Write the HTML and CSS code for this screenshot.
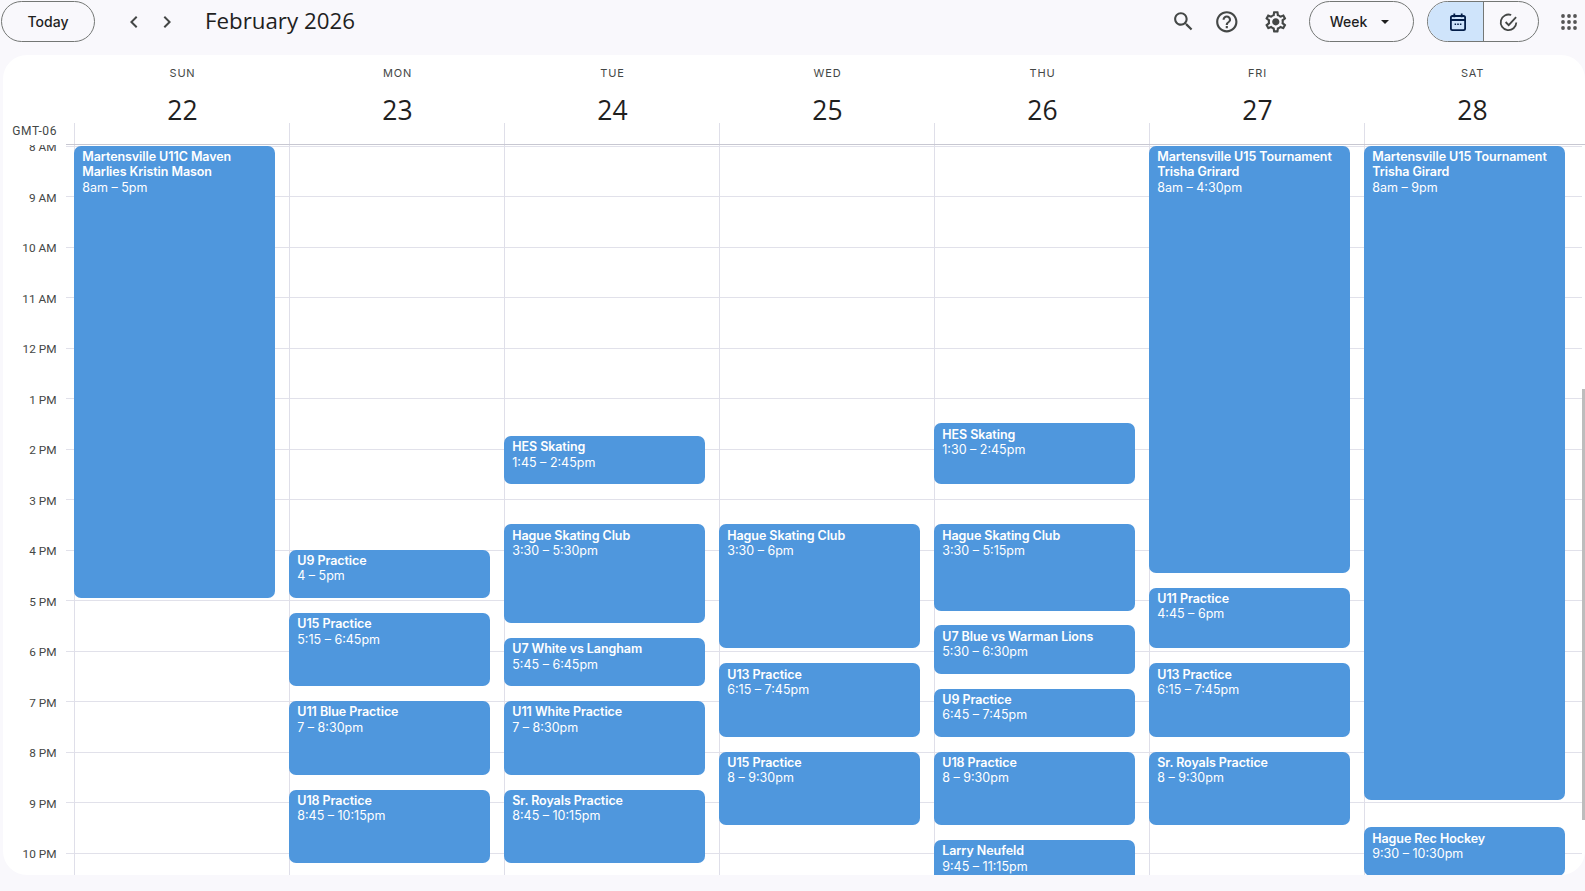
FILE: index.html
```html
<!doctype html>
<html>
<head>
    <meta charset="UTF-8">
    <title>February 2026 - Calendar</title>
    <link rel="stylesheet" href="styles.css">
</head>
<body>
<div class="m-top">
    <button class="btn today">Today</button>
    <div class="nav">
        <svg viewBox="0 0 24 24"><path d="M15.41 7.41 14 6l-6 6 6 6 1.41-1.41L10.83 12z"/></svg>
        <svg viewBox="0 0 24 24"><path d="M8.59 16.59 10 18l6-6-6-6-1.41 1.41L13.17 12z"/></svg>
    </div>
    <h1 class="title">February 2026</h1>
    <div class="tools">
        <svg class="ico search" viewBox="0 0 24 24"><path d="M15.5 14h-.79l-.28-.27C15.41 12.59 16 11.11 16 9.5 16 5.91 13.09 3 9.5 3S3 5.91 3 9.5 5.91 16 9.5 16c1.61 0 3.09-.59 4.23-1.57l.27.28v.79l5 4.99L20.49 19l-4.99-5zm-6 0C7.01 14 5 11.99 5 9.5S7.01 5 9.5 5 14 7.01 14 9.5 11.99 14 9.5 14z"/></svg>
        <svg class="ico help" viewBox="0 0 24 24"><path d="M11 18h2v-2h-2v2zm1-16C6.48 2 2 6.48 2 12s4.48 10 10 10 10-4.48 10-10S17.52 2 12 2zm0 18c-4.41 0-8-3.59-8-8s3.59-8 8-8 8 3.59 8 8-3.59 8-8 8zm0-14c-2.21 0-4 1.79-4 4h2c0-1.1.9-2 2-2s2 .9 2 2c0 2-3 1.75-3 5h2c0-2.25 3-2.5 3-5 0-2.21-1.79-4-4-4z"/></svg>
        <svg class="ico gear" viewBox="0 0 24 24"><path d="M19.43 12.98c.04-.32.07-.64.07-.98 0-.34-.03-.66-.07-.98l2.11-1.65c.19-.15.24-.42.12-.64l-2-3.46c-.09-.16-.26-.25-.44-.25-.06 0-.12.01-.17.03l-2.49 1c-.52-.4-1.08-.73-1.69-.98l-.38-2.65C14.46 2.18 14.25 2 14 2h-4c-.25 0-.46.18-.49.42l-.38 2.65c-.61.25-1.17.59-1.69.98l-2.49-1c-.06-.02-.12-.03-.18-.03-.17 0-.34.09-.43.25l-2 3.46c-.13.22-.07.49.12.64l2.11 1.65c-.04.32-.07.65-.07.98 0 .33.03.66.07.98l-2.11 1.65c-.19.15-.24.42-.12.64l2 3.46c.09.16.26.25.44.25.06 0 .12-.01.17-.03l2.49-1c.52.4 1.08.73 1.69.98l.38 2.65c.03.24.24.42.49.42h4c.25 0 .46-.18.49-.42l.38-2.65c.61-.25 1.17-.59 1.69-.98l2.49 1c.06.02.12.03.18.03.17 0 .34-.09.43-.25l2-3.46c.12-.22.07-.49-.12-.64l-2.11-1.65zm-1.98-1.71c.04.31.05.52.05.73 0 .21-.02.43-.05.73l-.14 1.13.89.7 1.08.84-.7 1.21-1.27-.51-1.04-.42-.9.68c-.43.32-.84.56-1.25.73l-1.06.43-.16 1.13-.2 1.35h-1.4l-.19-1.35-.16-1.13-1.06-.43c-.43-.18-.83-.41-1.23-.71l-.91-.7-1.06.43-1.27.51-.7-1.21 1.08-.84.89-.7-.14-1.13c-.03-.31-.05-.54-.05-.74s.02-.43.05-.73l.14-1.13-.89-.7-1.08-.84.7-1.21 1.27.51 1.04.42.9-.68c.43-.32.84-.56 1.25-.73l1.06-.43.16-1.13.2-1.35h1.39l.19 1.35.16 1.13 1.06.43c.43.18.83.41 1.23.71l.91.7 1.06-.43 1.27-.51.7 1.21-1.07.85-.89.7.14 1.13zM12 8.6c-1.88 0-3.4 1.52-3.4 3.4s1.52 3.4 3.4 3.4 3.4-1.52 3.4-3.4-1.52-3.4-3.4-3.4z"/></svg>
    </div>
    <button class="btn week">Week<i class="caret"></i></button>
    <div class="toggle">
        <span class="on">
            <svg viewBox="0 0 24 24"><rect x="4.9" y="6" width="14.2" height="14.2" rx="1.6" class="line"/><path d="M4.9 10h14.2" class="line"/><path d="M8.3 3.4v3.8M15.7 3.4v3.8" class="line"/><path d="M8.6 13.6h1.5v1.3H8.6zM11.2 13.6h1.6v1.3h-1.6zM13.9 13.6h1.5v1.3h-1.5z"/></svg>
        </span>
        <span class="off">
            <svg viewBox="0 0 24 24"><path d="M18.3 12.5A7.8 7.8 0 1 1 13.2 5" class="line"/><path d="m7.6 12 3.1 3.2 7.4-8" class="line"/></svg>
        </span>
    </div>
    <svg class="apps" viewBox="0 0 18 18"><circle cx="3" cy="3" r="1.9"/><circle cx="9" cy="3" r="1.9"/><circle cx="15" cy="3" r="1.9"/><circle cx="3" cy="9" r="1.9"/><circle cx="9" cy="9" r="1.9"/><circle cx="15" cy="9" r="1.9"/><circle cx="3" cy="15" r="1.9"/><circle cx="9" cy="15" r="1.9"/><circle cx="15" cy="15" r="1.9"/></svg>
</div>
<div class="m-cal">
    <div class="hd">
        <div class="gmt">GMT-06</div>
        <div class="dh"><p class="nm">SUN</p><p class="num">22</p><div class="tick"></div></div>
        <div class="dh"><p class="nm">MON</p><p class="num">23</p><div class="tick"></div></div>
        <div class="dh"><p class="nm">TUE</p><p class="num">24</p><div class="tick"></div></div>
        <div class="dh"><p class="nm">WED</p><p class="num">25</p><div class="tick"></div></div>
        <div class="dh"><p class="nm">THU</p><p class="num">26</p><div class="tick"></div></div>
        <div class="dh"><p class="nm">FRI</p><p class="num">27</p><div class="tick"></div></div>
        <div class="dh"><p class="nm">SAT</p><p class="num">28</p><div class="tick"></div></div>
    </div>
    <div class="bd">
        <div class="lines">
            <i></i><i></i><i></i><i></i><i></i><i></i><i></i><i></i><i></i><i></i><i></i><i></i><i></i><i></i><i></i>
        </div>
        <ul class="times">
            <li>8 AM</li><li>9 AM</li><li>10 AM</li><li>11 AM</li><li>12 PM</li><li>1 PM</li><li>2 PM</li><li>3 PM</li><li>4 PM</li><li>5 PM</li><li>6 PM</li><li>7 PM</li><li>8 PM</li><li>9 PM</li><li>10 PM</li>
        </ul>
        <div class="day">
            <div class="ev" style="--s:0;--d:9"><b>Martensville U11C Maven<br>Marlies Kristin Mason</b>8am – 5pm</div>
        </div>
        <div class="day">
            <div class="ev" style="--s:8;--d:1"><b>U9 Practice</b>4 – 5pm</div>
            <div class="ev" style="--s:9.25;--d:1.5"><b>U15 Practice</b>5:15 – 6:45pm</div>
            <div class="ev" style="--s:11;--d:1.5"><b>U11 Blue Practice</b>7 – 8:30pm</div>
            <div class="ev" style="--s:12.75;--d:1.5"><b>U18 Practice</b>8:45 – 10:15pm</div>
        </div>
        <div class="day">
            <div class="ev" style="--s:5.75;--d:1"><b>HES Skating</b>1:45 – 2:45pm</div>
            <div class="ev" style="--s:7.5;--d:2"><b>Hague Skating Club</b>3:30 – 5:30pm</div>
            <div class="ev" style="--s:9.75;--d:1"><b>U7 White vs Langham</b>5:45 – 6:45pm</div>
            <div class="ev" style="--s:11;--d:1.5"><b>U11 White Practice</b>7 – 8:30pm</div>
            <div class="ev" style="--s:12.75;--d:1.5"><b>Sr. Royals Practice</b>8:45 – 10:15pm</div>
        </div>
        <div class="day">
            <div class="ev" style="--s:7.5;--d:2.5"><b>Hague Skating Club</b>3:30 – 6pm</div>
            <div class="ev" style="--s:10.25;--d:1.5"><b>U13 Practice</b>6:15 – 7:45pm</div>
            <div class="ev" style="--s:12;--d:1.5"><b>U15 Practice</b>8 – 9:30pm</div>
        </div>
        <div class="day">
            <div class="ev" style="--s:5.5;--d:1.25"><b>HES Skating</b>1:30 – 2:45pm</div>
            <div class="ev" style="--s:7.5;--d:1.75"><b>Hague Skating Club</b>3:30 – 5:15pm</div>
            <div class="ev" style="--s:9.5;--d:1"><b>U7 Blue vs Warman Lions</b>5:30 – 6:30pm</div>
            <div class="ev" style="--s:10.75;--d:1"><b>U9 Practice</b>6:45 – 7:45pm</div>
            <div class="ev" style="--s:12;--d:1.5"><b>U18 Practice</b>8 – 9:30pm</div>
            <div class="ev" style="--s:13.75;--d:1.5"><b>Larry Neufeld</b>9:45 – 11:15pm</div>
        </div>
        <div class="day">
            <div class="ev" style="--s:0;--d:8.5"><b>Martensville U15 Tournament<br>Trisha Grirard</b>8am – 4:30pm</div>
            <div class="ev" style="--s:8.75;--d:1.25"><b>U11 Practice</b>4:45 – 6pm</div>
            <div class="ev" style="--s:10.25;--d:1.5"><b>U13 Practice</b>6:15 – 7:45pm</div>
            <div class="ev" style="--s:12;--d:1.5"><b>Sr. Royals Practice</b>8 – 9:30pm</div>
        </div>
        <div class="day">
            <div class="ev" style="--s:0;--d:13"><b>Martensville U15 Tournament<br>Trisha Girard</b>8am – 9pm</div>
            <div class="ev" style="--s:13.5;--d:1"><b>Hague Rec Hockey</b>9:30 – 10:30pm</div>
        </div>
        <div class="thumb"></div>
    </div>
</div>
</body>
</html>
```

FILE: styles.css
```css
html, body, h1, ul, p { margin: 0; padding: 0; }
ul { list-style: none; }
html, body { height: 100%; overflow: hidden; }
body { background: #f9f8fc; color: #1f1f1f; font-family: "Open Sans", "Noto Sans", sans-serif; }

/* top bar */
.m-top { display: flex; align-items: center; height: 43px; padding: 0 0 12px 1px; }
.btn { display: flex; align-items: center; justify-content: center; height: 41px; border: 1px solid #747775; border-radius: 21px; background: transparent; color: #1f1f1f; font: 500 14px Inter, sans-serif; padding: 0; }
.today { width: 94px; }
.nav { display: flex; gap: 9px; margin-left: 27px; }
.nav svg { width: 24px; height: 24px; fill: #444746; }
.title { margin: 0 0 2px 26px; font: 400 22.3px/28px "Open Sans", sans-serif; color: #1f1f1f; }
.tools { display: flex; align-items: center; margin-left: auto; }
.ico { fill: #444746; }
.search { width: 25px; height: 25px; }
.help { width: 25.6px; height: 25.6px; margin-left: 18px; }
.gear { width: 25.6px; height: 25.6px; margin-left: 23.5px; }
.week { width: 105px; margin-left: 20px; gap: 14px; padding-right: 4px; }
.caret { width: 0; height: 0; border: 4px solid transparent; border-top: 4px solid #1f1f1f; border-bottom: 0; }
.toggle { display: flex; width: 112px; height: 41px; margin-left: 13px; border: 1px solid #747775; border-radius: 21px; overflow: hidden; box-sizing: border-box; }
.toggle span { display: flex; align-items: center; justify-content: center; box-sizing: border-box; }
.toggle .on { flex: 0 0 56px; background: #cfe4fb; border-right: 1px solid #747775; padding-left: 5px; }
.toggle .off { flex: 1; padding-right: 3px; }
.toggle svg { width: 24px; height: 24px; fill: #041e49; }
.toggle .off svg { fill: #444746; }
.toggle .line { fill: none; stroke: #041e49; stroke-width: 1.8; }
.toggle .off .line { stroke: #444746; }
.apps { width: 18px; height: 18px; margin: 0 7px 0 21px; fill: #555; }

/* calendar panel */
.m-cal { position: relative; display: flex; flex-direction: column; height: 820px; margin-left: 3px; background: #fff; border-radius: 24px; overflow: hidden; }
.hd { display: flex; height: 90px; box-sizing: border-box; position: relative; flex: none; }
.hd:after { content: ""; position: absolute; left: 63px; right: 0; bottom: 0; height: 1px; background: #c8c8d2; }
.gmt { width: 71px; height: 90px; box-sizing: border-box; padding: 68px 17px 0 0; text-align: right; font: 12px/16px Roboto, sans-serif; color: #444746; letter-spacing: .6px; }
.dh { width: 215px; text-align: center; text-indent: 2px; }
.nm { height: 16px; padding-top: 10px; font: 400 11px/16px Inter, sans-serif; letter-spacing: .8px; color: #444746; }
.num { height: 26px; padding-top: 16px; font: 400 26.5px/26px "Open Sans", sans-serif; color: #1f1f1f; }
.tick { height: 22px; border-left: 1px solid #dfdfe9; }

.bd { position: relative; flex: 1; display: flex; overflow: hidden; }
.lines { position: absolute; left: 63px; right: 3px; top: .75px; display: flex; flex-direction: column; }
.lines i { display: block; height: 50.5px; box-sizing: border-box; border-top: 1px solid #e1e1ea; flex: none; }
.times { position: relative; width: 71px; margin-top: -6px; flex: none; font: 11.8px/16px Roboto, sans-serif; color: #444746; text-align: right; }
.times li { height: 50.5px; padding-right: 17.5px; box-sizing: border-box; }
.day { position: relative; width: 215px; flex: none; border-left: 1px solid #dfdfe9; box-sizing: border-box; }
.ev { position: absolute; left: -1px; width: 201px; top: calc(var(--s) * 50.5px + .7px); height: calc(var(--d) * 50.5px - 2.25px); box-sizing: border-box; padding: 3.3px 8.25px; background: #4f97dd; border-radius: 7px; color: #fff; font: 400 12.5px/15.5px Inter, sans-serif; overflow: hidden; }
.ev b { display: block; font-weight: 600; letter-spacing: -.07px; }
.thumb { position: absolute; right: 0; top: 244px; width: 3px; height: 431px; background: #bdbdbd; }
```
